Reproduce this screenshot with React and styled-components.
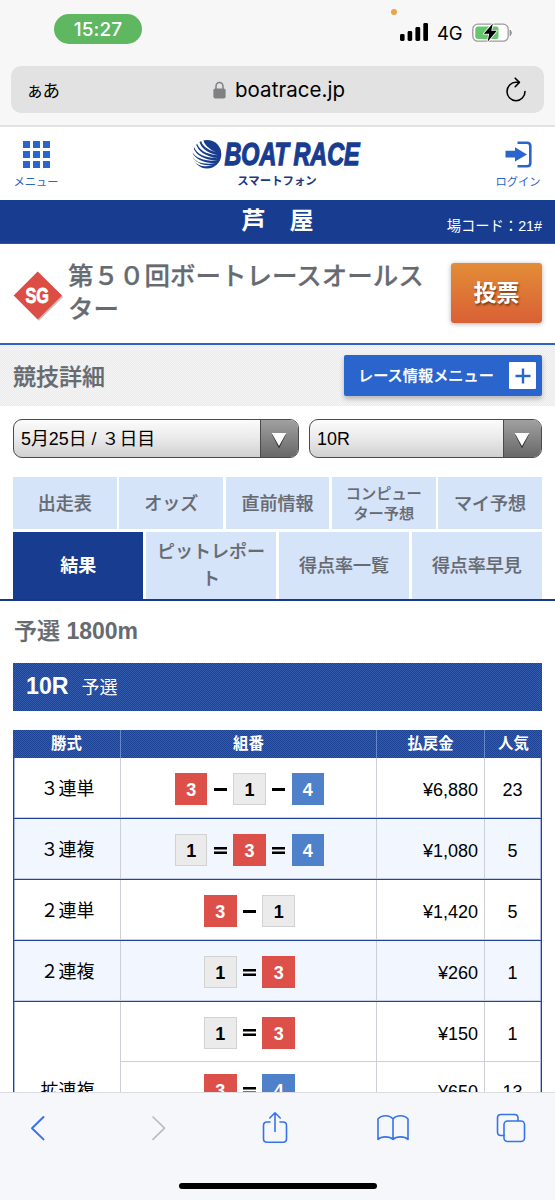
import React from "react";
import styled, { createGlobalStyle, css } from "styled-components";

const navy = "#183d90";
const blue = "#2a64cd";
const grey = "#666a71";

const Global = createGlobalStyle`
  * { box-sizing: border-box; }
  body { margin: 0; background: #fff; }
`;

const patterned = (a, b) => css`
  background: conic-gradient(${a} 25%, ${b} 0 50%, ${a} 0 75%, ${b} 0) 0 0 / 2px 2px;
`;
const medium = css`
  font-weight: 500;
  -webkit-text-stroke: 0.25px currentColor;
`;

const Screen = styled.div`
  width: 555px;
  height: 1200px;
  display: flex;
  flex-direction: column;
  overflow: hidden;
  background: #fff;
  color: #000;
  font-family: "Liberation Sans", "Noto Sans CJK JP", sans-serif;
  line-height: 1;
  white-space: nowrap;
`;

/* Browser chrome */
const Chrome = styled.div`
  flex: none;
  height: 127px;
  background: #f7f7f7;
  border-bottom: 2px solid #e3e3e3;
  font-family: Inter, "Noto Sans CJK JP", sans-serif;
`;
const StatusBar = styled.div`
  height: 66px;
  padding: 14px 41px 0 54px;
  display: flex;
  justify-content: space-between;
`;
const Clock = styled.div`
  width: 88px;
  height: 30px;
  border-radius: 15px;
  background: #5fb762;
  color: #fff;
  font-size: 19px;
  font-weight: 500;
  line-height: 31px;
  text-align: center;
  letter-spacing: 0.1px;
`;
const Indicators = styled.div`
  display: flex;
  position: relative;
  padding-top: 9px;
  height: 30px;
`;
const MicDot = styled.i`
  position: absolute;
  left: -9px;
  top: -5px;
  width: 6px;
  height: 6px;
  border-radius: 50%;
  background: #eaa34a;
`;
const Network = styled.span`
  font-size: 18.5px;
  line-height: 21px;
  width: 44px;
  padding-left: 9px;
  letter-spacing: -0.2px;
`;
const AddressBar = styled.div`
  margin: 0 11px;
  height: 47px;
  padding: 0 17px 0 15px;
  border-radius: 10px;
  background: #e2e2e2;
  display: grid;
  grid-template-columns: 60px 1fr 60px;
  align-items: center;
`;
const Reader = styled.span`
  font-family: "Noto Sans CJK JP", sans-serif;
  font-size: 17.5px;
  letter-spacing: -1px;
`;
const Host = styled.span`
  display: flex;
  align-items: center;
  justify-content: center;
  gap: 9px;
  font-size: 20.5px;
  line-height: 24px;
  letter-spacing: 0.05px;
  padding-left: 5px;
`;
const ReloadSlot = styled.span`
  display: flex;
  justify-content: flex-end;
`;

/* Site header */
const Page = styled.main`
  flex: 1;
  min-height: 0;
  overflow: hidden;
`;
const SiteHeader = styled.header`
  height: 73px;
  display: flex;
  justify-content: space-between;
  padding: 0 14px 0 13px;
`;
const HeaderLink = styled.div`
  width: 46px;
  display: flex;
  flex-direction: column;
  align-items: center;
  padding-top: 14px;
  gap: 9px;
  color: ${blue};
  font-size: 11.3px;
`;
const Brand = styled.div`
  display: flex;
  flex-direction: column;
  align-items: center;
  gap: 3px;
  padding-top: 9px;
  color: #173a85;
  font-size: 11.4px;
  font-weight: 700;
`;
const VenueBar = styled.div`
  height: 44px;
  background: ${navy};
  color: #fff;
  display: grid;
  grid-template-columns: 1fr auto 1fr;
  padding-right: 13px;
  border-bottom: 1px solid #2c55a8;
`;
const Venue = styled.h1`
  margin: 0;
  font-size: 24px;
  font-weight: 700;
  line-height: 42px;
  padding-left: 13px;
`;
const VenueCode = styled.span`
  grid-column: 3;
  text-align: right;
  font-size: 14.3px;
  line-height: 52px;
`;

/* Title and menu */
const TitleRow = styled.section`
  height: 101px;
  display: flex;
  align-items: flex-start;
  padding: 0 13px 0 13px;
  border-bottom: 2px solid #2f62c4;
`;
const Grade = styled.svg`
  flex: none;
  margin-top: 26px;
`;
const Title = styled.h2`
  margin: 16px 11px 0 3px;
  width: 372px;
  font-size: 25.5px;
  ${medium}
  line-height: 33px;
  color: ${grey};
  white-space: normal;
  word-break: break-all;
  line-break: anywhere;
`;
const VoteButton = styled.button`
  flex: none;
  width: 91px;
  height: 60px;
  margin-top: 19px;
  padding: 0 0 4px;
  border: 0;
  border-radius: 3px;
  background: linear-gradient(#e28d37, #da6035);
  box-shadow: 0 1px 5px rgba(0, 0, 0, 0.3);
  color: #fff;
  font: 700 23px "Noto Sans CJK JP", sans-serif;
  text-shadow: 1px 2px 2px rgba(90, 40, 10, 0.7);
`;
const SectionRow = styled.section`
  height: 61px;
  ${patterned("#f5f5f5", "#ebebeb")}
  display: flex;
  justify-content: space-between;
  align-items: center;
  padding: 0 13px;
  h3 {
    margin: 4px 0 0;
    font-size: 23px;
    ${medium}
    color: ${grey};
  }
`;
const MenuButton = styled.button`
  width: 198px;
  height: 41px;
  display: flex;
  align-items: center;
  justify-content: space-between;
  padding: 0 6px 0 14px;
  border: 0;
  border-radius: 2px;
  background: ${blue};
  box-shadow: 0 3px 5px rgba(0, 0, 0, 0.25);
  color: #fff;
  font: 500 15.2px "Noto Sans CJK JP", sans-serif;
  -webkit-text-stroke: 0.25px #fff;
`;
const MenuLabel = styled.span`
  padding-bottom: 3px;
`;
const PlusBox = styled.span`
  width: 27px;
  height: 27px;
  border-radius: 1px;
  background: #fff;
  display: grid;
  place-items: center;
`;

/* Selects */
const Selects = styled.div`
  display: grid;
  grid-template-columns: 286px 233px;
  gap: 10px;
  padding: 13px 13px 19px;
`;
const Select = styled.div`
  height: 39px;
  display: flex;
  border: 1px solid #4b4b4b;
  border-radius: 9px;
  overflow: hidden;
  background: linear-gradient(#fbfbfb, #ececec 45%, #d0d0d0);
  font-size: 17.9px;
  line-height: 38px;
  span { flex: 1; padding-left: 7px; }
`;
const Arrow = styled.i`
  width: 38px;
  border-left: 1px solid #4b4b4b;
  background: linear-gradient(#a0a0a0, #686868);
  display: grid;
  place-items: center;
  padding: 3px 2px 0 0;
`;

/* Tabs */
const Tabs = styled.nav`
  padding: 0 13px;
  border-bottom: 2px solid #19388a;
`;
const TabRow = styled.div`
  display: flex;
  gap: 2.6px;
  height: ${(p) => p.$height}px;
  margin-bottom: ${(p) => p.$after || 0}px;
`;
const Tab = styled.a`
  flex: 1 1 0;
  display: flex;
  align-items: center;
  justify-content: center;
  text-align: center;
  background: ${(p) => (p.$active ? navy : "#d6e4fa")};
  color: ${(p) => (p.$active ? "#fff" : grey)};
  font-size: ${(p) => (p.$small ? 15.2 : 18)}px;
  line-height: ${(p) => (p.$small ? 19.5 : 27)}px;
  font-weight: ${(p) => (p.$active ? 700 : 500)};
  -webkit-text-stroke: ${(p) => (p.$active ? 0 : 0.2)}px currentColor;
  padding-top: ${(p) => p.$drop || 0}px;
`;

/* Results */
const Distance = styled.h3`
  margin: 0;
  height: 62px;
  padding-left: 14px;
  font-size: 23px;
  line-height: 60px;
  font-weight: 700;
  color: ${grey};
  b { ${medium} }
`;
const RaceBar = styled.div`
  height: 48px;
  margin: 0 13px 19px;
  padding-left: 13px;
  ${patterned("#1d4397", "#335aab")}
  color: #fff;
  display: flex;
  align-items: baseline;
  gap: 13px;
  line-height: 46px;
  font-size: 18px;
  strong { font-size: 23.2px; }
`;
const Table = styled.div`
  margin: 0 13px;
`;
const HeadRow = styled.div`
  height: 28px;
  display: grid;
  grid-template-columns: 107px 256px 108px 1fr;
  ${patterned("#1d4397", "#335aab")}
  color: #fff;
  font-size: 15.4px;
  font-weight: 700;
  line-height: 28px;
  text-align: center;
  span + span { border-left: 1px solid #6688c8; }
`;
const Group = styled.div`
  display: grid;
  grid-template-columns: 106px 256px 108px 1fr;
  grid-auto-rows: ${(p) => (p.$multi ? 59 : 60)}px;
  border: solid #23439a;
  border-width: 0 1px 1px;
  background: ${(p) => (p.$shade ? "#f2f6fe" : "#fff")};
  box-shadow: inset 1px 0 #a9b9e0, inset -1px 0 #a9b9e0, inset 0 -1px #c3cfea;
`;
const Cell = styled.div`
  display: flex;
  align-items: center;
  justify-content: ${(p) => p.$align || "center"};
  padding: ${(p) => p.$pad || 0};
  font-size: 18px;
  border-left: ${(p) => (p.$label ? 0 : "1px solid #cdced6")};
  border-top: ${(p) => (p.$ruled ? "1px solid #cdced6" : 0)};
  grid-row: ${(p) => (p.$span ? `span ${p.$span}` : "auto")};
`;
const boats = {
  1: ["#ebebeb", "#000", "#d2d2d2"],
  3: ["#dc5049", "#fff", "#dc5049"],
  4: ["#4f80ca", "#fff", "#4f80ca"],
};
const Boat = styled.b`
  width: 32.5px;
  height: 32px;
  background: ${(p) => boats[p.$n][0]};
  color: ${(p) => boats[p.$n][1]};
  border: 1px solid ${(p) => boats[p.$n][2]};
  font-size: 18px;
  line-height: 33px;
  text-align: center;
`;
const Join = styled.i`
  width: 13px;
  margin: 0 6.4px;
  height: ${(p) => (p.$double ? 7 : 3)}px;
  background: ${(p) =>
    p.$double ? "linear-gradient(#000 2px, #777 2px 3px, transparent 3px 4px, #777 4px 5px, #000 5px)" : "#000"};
`;

/* Bottom toolbar */
const Toolbar = styled.footer`
  flex: none;
  height: 108px;
  background: #f6f7fa;
  border-top: 1px solid #dcdde0;
  display: flex;
  flex-direction: column;
  align-items: center;
  justify-content: space-between;
`;
const ToolIcons = styled.div`
  width: 100%;
  height: 69px;
  padding: 0 26px 0 20px;
  display: flex;
  align-items: center;
  justify-content: space-between;
`;
const ToolSlot = styled.span`
  width: 36px;
  display: flex;
  justify-content: center;
`;
const HomeBar = styled.div`
  width: 198px;
  height: 6px;
  margin-bottom: 11px;
  border-radius: 3px;
  background: #000;
`;

const SignalIcon = () => (
  <svg width="28" height="18" viewBox="0 0 28 18">
    <rect x="0" y="11" width="4.6" height="7" rx="1.4" />
    <rect x="7.6" y="8" width="4.6" height="10" rx="1.4" />
    <rect x="15.4" y="4" width="4.8" height="14" rx="1.4" />
    <rect x="23.3" y="0" width="4.8" height="18" rx="1.4" />
  </svg>
);
const BatteryIcon = () => (
  <svg width="42" height="22" viewBox="0 0 42 22">
    <rect x="0.8" y="1.2" width="35.4" height="17" rx="5" fill="#fff" stroke="#9b9b9b" strokeWidth="1.3" />
    <path d="M6 3.4h18.500q2 0 2 2v8.600q0 2-2 2H6q-2.700 0-2.700-2.700V6.100Q3.300 3.400 6 3.400z" fill="#66c66b" />
    <path d="M38.200 7q2.400 2.800 0 5.600z" fill="#8d8d8d" stroke="#8d8d8d" />
    <path d="M20.800 0.400 11.800 10.800h5.400L15.600 18.800l9.200-11h-5.500z" fill="#000" stroke="#fff" strokeWidth="1.600" paintOrder="stroke" strokeLinejoin="round" />
  </svg>
);
const LockIcon = () => (
  <svg width="13" height="18" viewBox="0 0 13 18">
    <path d="M3 8V5.200a3.500 3.800 0 0 1 7 0V8" fill="none" stroke="#808083" strokeWidth="1.500" />
    <rect x="0.400" y="7.500" width="12.200" height="10" rx="1.800" fill="#808083" />
  </svg>
);
const ReloadIcon = () => (
  <svg width="22" height="26" viewBox="0 0 22 26" fill="none" stroke="#000" strokeWidth="1.600" strokeLinecap="round" strokeLinejoin="round">
    <path d="M20 14.500a9 9.200 0 1 1-9-9.200h3" />
    <path d="M10.200 1.200 14.400 5.400 10.200 9.700" />
  </svg>
);
const GridIcon = () => (
  <svg width="27" height="27" viewBox="0 0 27 27" fill={blue}>
    {[0, 10, 20].map((y) => [0, 10, 20].map((x) => <rect key={x + "-" + y} x={x} y={y} width="7" height="7" />))}
  </svg>
);
const LoginIcon = () => (
  <svg width="27" height="27" viewBox="0 0 27 27">
    <path d="M12.500 1.700H22q3.300 0 3.300 3.300v17q0 3.300-3.300 3.300H12.500" fill="none" stroke={blue} strokeWidth="2.600" />
    <path d="M0.500 9.800h9.500V6.200L22 13.400 10 20.600v-4H0.500z" fill={blue} />
  </svg>
);
const Word = ({ x, squeeze, children }) => (
  <text transform={`translate(${x} 27.3) scale(${squeeze} 1)`} fontFamily="'Liberation Sans', sans-serif" fontWeight="700" fontStyle="italic" fontSize="30.5" fill={navy} stroke={navy} strokeWidth="1.3">{children}</text>
);
const Logo = () => (
  <svg width="170" height="37" viewBox="0 -2 170 37">
    <circle cx="15" cy="16.200" r="14.300" fill={navy} />
    <g fill="#fff">
      <path d="M10.800 0.500Q12.500 9.500 24 14.200 10.500 11 8.600 1.500z" />
      <path d="M7 2.500Q9.500 13.500 25.500 17.300 7.500 15.500 4.800 4.500z" />
      <path d="M3.800 5.500Q7 17.500 26 20.200 5 19.500 2 8.500z" />
      <path d="M1.200 9.500Q5.500 21.500 25.500 22.800 3.500 23 0 13z" />
      <path d="M0 14Q5 25 23.500 25.200 4 27.500 0 18z" />
      <path d="M1 20Q7 28 20.500 27.500 7 30.500 1.500 22.500z" />
    </g>
    <Word x="32.5" squeeze="0.765">BOAT</Word>
    <Word x="101.5" squeeze="0.765">RACE</Word>
  </svg>
);
const GradeMark = () => (
  <Grade width="52" height="52" viewBox="0 0 52 52">
    <path d="M26 3 50.200 27 26 50.800 3 27z" fill="#9a9a9a" opacity="0.600" />
    <path d="M24.700 1.500 49 25.500 24.700 49.500 0.700 25.500z" fill="#dc4d45" />
    <text transform="translate(12.5 32.6) scale(0.74 1)" fontFamily="'Liberation Sans', sans-serif" fontWeight="700" fontSize="22" fill="#fff" stroke="#fff" strokeWidth="0.8">SG</text>
  </Grade>
);
const Triangle = () => (
  <svg width="18" height="17" viewBox="0 0 18 17">
    <path d="M2 2.500h14L9 16.500z" fill="#333" />
    <path d="M1.700 1h14.600L9 14z" fill="#fff" />
  </svg>
);
const ToolIcon = ({ color = "#3573ed", w, h, children }) => (
  <ToolSlot>
    <svg width={w} height={h} viewBox={`0 0 ${w} ${h}`} fill="none" stroke={color} strokeWidth="1.600" strokeLinecap="round" strokeLinejoin="round">
      {children}
    </svg>
  </ToolSlot>
);

const Combo = ({ value }) => value.split("").map((c, i) => (/\d/.test(c) ? <Boat key={i} $n={c}>{c}</Boat> : <Join key={i} $double={c === "="} />));

const results = [
  { label: "３連単", lines: [["3-1-4", "6,880", 23]] },
  { label: "３連複", lines: [["1=3=4", "1,080", 5]] },
  { label: "２連単", lines: [["3-1", "1,420", 5]] },
  { label: "２連複", lines: [["1=3", "260", 1]] },
  { label: "拡連複", lines: [["1=3", "150", 1], ["3=4", "650", 13], ["1=4", "240", 3]] },
];

export default function App() {
  return (
    <Screen>
      <Global />
      <Chrome>
        <StatusBar>
          <Clock>15:27</Clock>
          <Indicators>
            <MicDot />
            <SignalIcon />
            <Network>4G</Network>
            <BatteryIcon />
          </Indicators>
        </StatusBar>
        <AddressBar>
          <Reader>ぁあ</Reader>
          <Host><LockIcon />boatrace.jp</Host>
          <ReloadSlot><ReloadIcon /></ReloadSlot>
        </AddressBar>
      </Chrome>

      <Page>
        <SiteHeader>
          <HeaderLink><GridIcon />メニュー</HeaderLink>
          <Brand><Logo />スマートフォン</Brand>
          <HeaderLink><LoginIcon />ログイン</HeaderLink>
        </SiteHeader>
        <VenueBar>
          <span />
          <Venue>芦　屋</Venue>
          <VenueCode>場コード：21#</VenueCode>
        </VenueBar>

        <TitleRow>
          <GradeMark />
          <Title>第５０回ボートレースオールスター</Title>
          <VoteButton>投票</VoteButton>
        </TitleRow>
        <SectionRow>
          <h3>競技詳細</h3>
          <MenuButton>
            <MenuLabel>レース情報メニュー</MenuLabel>
            <PlusBox>
              <svg width="16" height="16" viewBox="0 0 16 16" stroke={blue} strokeWidth="2.400"><path d="M8 0.500v15M0.500 8h15" /></svg>
            </PlusBox>
          </MenuButton>
        </SectionRow>

        <Selects>
          <Select><span>5月25日 / ３日目</span><Arrow><Triangle /></Arrow></Select>
          <Select><span>10R</span><Arrow><Triangle /></Arrow></Select>
        </Selects>

        <Tabs>
          <TabRow $height={52} $after={3}>
            <Tab $drop={2}>出走表</Tab>
            <Tab $drop={2}>オッズ</Tab>
            <Tab $drop={2}>直前情報</Tab>
            <Tab $small $drop={1}>コンピュー<br />ター予想</Tab>
            <Tab $drop={2}>マイ予想</Tab>
          </TabRow>
          <TabRow $height={67}>
            <Tab $active $drop={1}>結果</Tab>
            <Tab>ピットレポー<br />ト</Tab>
            <Tab $drop={1}>得点率一覧</Tab>
            <Tab $drop={1}>得点率早見</Tab>
          </TabRow>
        </Tabs>

        <Distance><b>予選</b> 1800m</Distance>
        <RaceBar><strong>10R</strong>予選</RaceBar>

        <Table>
          <HeadRow><span>勝式</span><span>組番</span><span>払戻金</span><span>人気</span></HeadRow>
          {results.map((group, g) => (
            <Group key={group.label} $shade={g % 2 === 1} $multi={group.lines.length > 1}>
              <Cell $label $span={group.lines.length} $pad="1px 0 0 1px">{group.label}</Cell>
              {group.lines.map(([combo, pay, rank], i) => (
                <React.Fragment key={combo}>
                  <Cell $ruled={i > 0} $pad={i > 0 ? "0 0 2px 2px" : "2px 0 0 2px"}><Combo value={combo} /></Cell>
                  <Cell $ruled={i > 0} $align="flex-end" $pad={i > 0 ? "2px 6px 0 0" : "4px 6px 0 0"}>¥{pay}</Cell>
                  <Cell $ruled={i > 0} $pad={i > 0 ? "2px 1px 0 0" : "4px 1px 0 0"}>{rank}</Cell>
                </React.Fragment>
              ))}
            </Group>
          ))}
        </Table>
      </Page>

      <Toolbar>
        <ToolIcons>
          <ToolIcon w={36} h={28}><path d="M23.500 3 12 14.200l11.500 11.200" strokeWidth="2" /></ToolIcon>
          <ToolIcon w={36} h={28} color="#bcbcbf"><path d="m15 3 11.500 11.200L15 25.400" strokeWidth="1.700" /></ToolIcon>
          <ToolIcon w={28} h={34}>
            <path d="M9 11H6q-3.500 0-3.500 3.500v13.200q0 3.500 3.500 3.500h16q3.500 0 3.500-3.500V14.500Q25.500 11 22 11h-3M14 20.500V2M8.800 7 14 1.800 19.200 7" />
          </ToolIcon>
          <ToolIcon w={32} h={28}>
            <path d="M16 5v20.500M16 5Q13.500 1.800 8.500 1.800 3.500 1.800 1 5v20.500q2.500-2.600 7.500-2.600T16 25.500q2.500-2.600 7.500-2.600T31 25.500V5q-2.500-3.200-7.500-3.200T16 5z" />
          </ToolIcon>
          <ToolIcon w={30} h={30}>
            <path d="M8 22.500H5q-3.500 0-3.500-3.500V5q0-3.500 3.500-3.500h13.500q3.500 0 3.500 3.500v2.500" />
            <rect x="8" y="8" width="20.500" height="20.500" rx="3.500" />
          </ToolIcon>
        </ToolIcons>
        <HomeBar />
      </Toolbar>
    </Screen>
  );
}
